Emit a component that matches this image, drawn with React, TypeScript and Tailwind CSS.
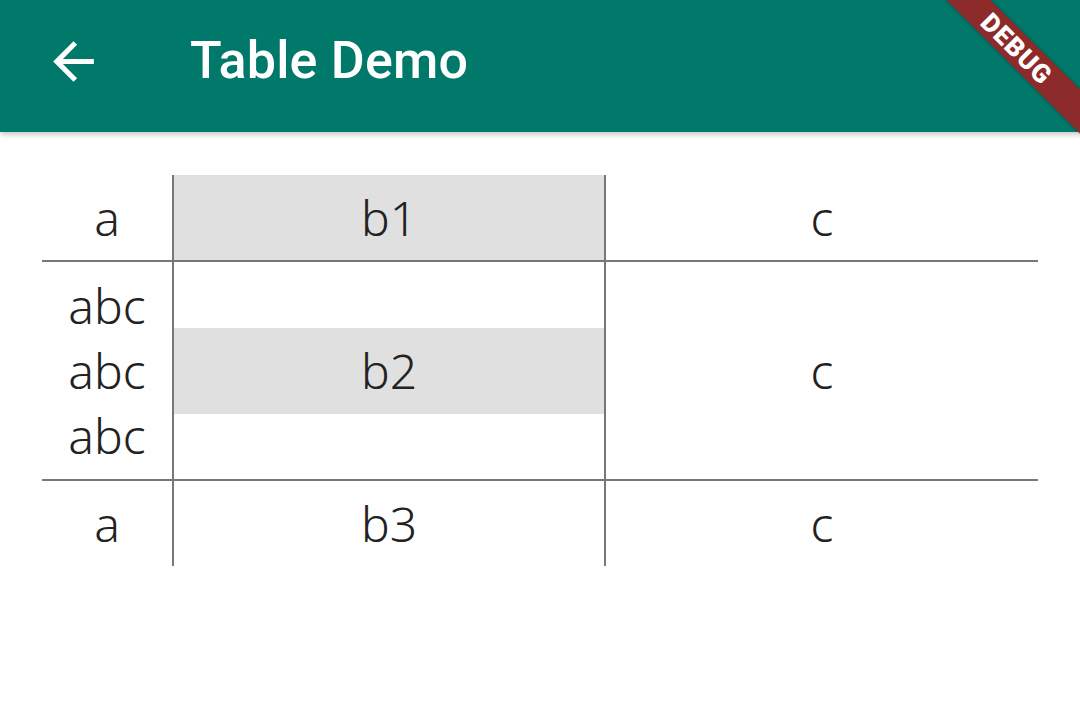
import React from 'react';

const cellText = 'text-[48px] leading-[65px] text-[#222222] font-light';

const Cell: React.FC<{ children?: React.ReactNode; className?: string }> = ({ children, className = '' }) => (
  <div className={`flex items-center justify-center py-[10px] ${className}`}>{children}</div>
);

export default function App() {
  return (
    <div className="relative w-[1080px] h-[706px] overflow-hidden bg-white" style={{ fontFamily: '"Noto Sans", "Open Sans", sans-serif' }}>
      {/* App bar */}
      <div className="relative z-10 h-[132px] bg-[#00796b] flex items-center pb-[10px] shadow-[0_2px_6px_rgba(0,0,0,0.25)]">
        <svg className="ml-[43px] w-[61px] h-[61px]" viewBox="0 0 24 24" fill="white">
          <path d="M20 11H7.83l5.59-5.59L12 4l-8 8 8 8 1.41-1.41L7.83 13H20v-2z" />
        </svg>
        <h1
          className="ml-[86px] text-[52px] font-medium text-white tracking-[0.2px]"
          style={{ fontFamily: 'Roboto, "Noto Sans", sans-serif' }}
        >
          Table Demo
        </h1>
      </div>

      {/* Debug banner */}
      <div className="absolute z-20 left-[914px] top-[40px] w-[220px] h-[31px] rotate-45 bg-[#8d2a2a] flex items-center justify-center shadow-[0_0_4px_rgba(0,0,0,0.3)]">
        <span
          className="-translate-x-[10px] text-white text-[26px] font-black leading-none tracking-[1px]"
          style={{ fontFamily: 'Roboto, "DejaVu Sans", sans-serif' }}
        >
          DEBUG
        </span>
      </div>

      {/* Table */}
      <div className={`ml-[42px] mt-[43px] w-[996px] grid grid-cols-[132px_432px_432px] ${cellText}`}>
        <Cell className="border-r-2 border-b-2 border-[#777777]">a</Cell>
        <Cell className="border-r-2 border-b-2 border-[#777777] bg-[#e0e0e0]">b1</Cell>
        <Cell className="border-b-2 border-[#777777]">c</Cell>

        <Cell className="border-r-2 border-b-2 border-[#777777] py-[11px]">
          <div className="flex flex-col items-center">
            <span>abc</span>
            <span>abc</span>
            <span>abc</span>
          </div>
        </Cell>
        <Cell className="border-r-2 border-b-2 border-[#777777]">
          <div className="w-full h-[86px] bg-[#e0e0e0] flex items-center justify-center">b2</div>
        </Cell>
        <Cell className="border-b-2 border-[#777777]">c</Cell>

        <Cell className="border-r-2 border-[#777777]">a</Cell>
        <Cell className="border-r-2 border-[#777777]">b3</Cell>
        <Cell>c</Cell>
      </div>
    </div>
  );
}
